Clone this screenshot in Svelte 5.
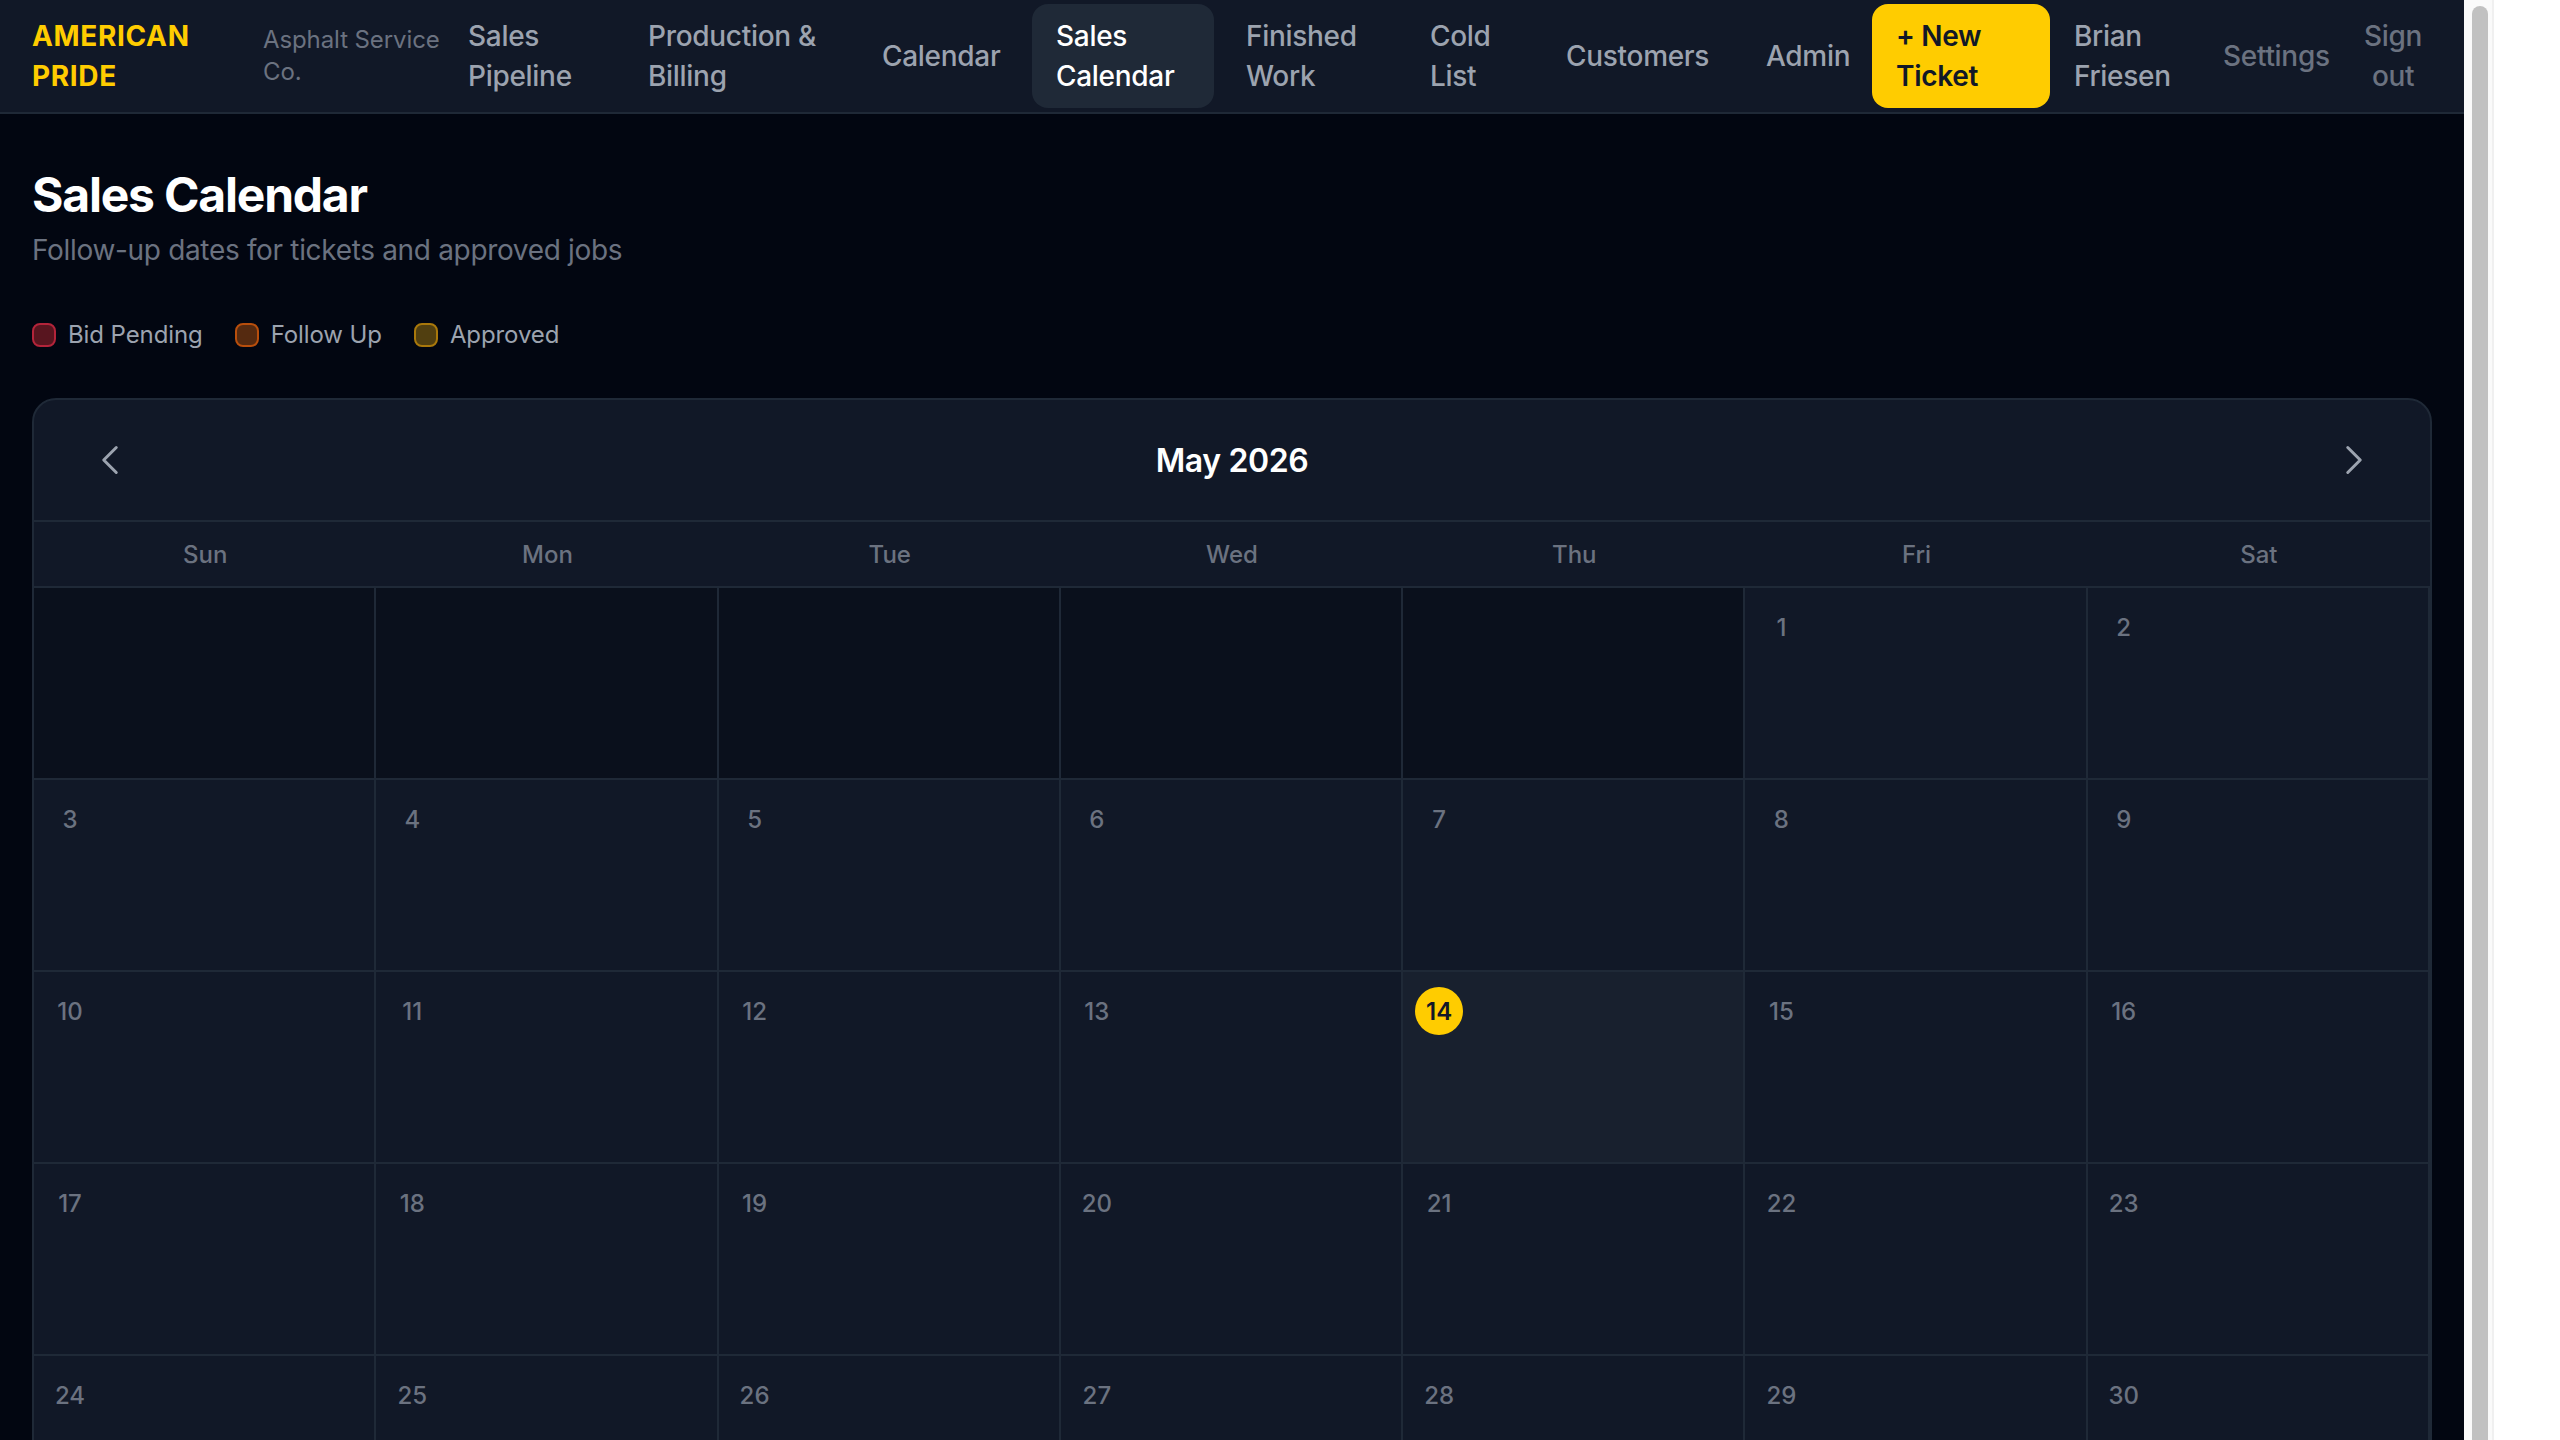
<script>
  const links = [
    { label: "Sales Pipeline", w: 172 },
    { label: "Production & Billing", w: 226 },
    { label: "Calendar", w: 166 },
    { label: "Sales Calendar", w: 182, active: true },
    { label: "Finished Work", w: 176 },
    { label: "Cold List", w: 128 },
    { label: "Customers", w: 192 },
    { label: "Admin", w: 122 },
    { label: "+ New Ticket", w: 178, cta: true },
    { label: "Brian Friesen", w: 145, user: true },
    { label: "Settings", w: 133, dim: true },
    { label: "Sign out", w: 80, dim: true, center: true },
  ];

  const legend = [
    { label: "Bid Pending", cls: "red" },
    { label: "Follow Up", cls: "orange" },
    { label: "Approved", cls: "amber" },
  ];

  const weekdays = ["Sun", "Mon", "Tue", "Wed", "Thu", "Fri", "Sat"];

  // May 2026 starts on a Friday
  const cells = [];
  for (let i = 0; i < 5; i++) cells.push(null);
  for (let d = 1; d <= 31; d++) cells.push(d);
  while (cells.length % 7) cells.push(null);
  const today = 14;
</script>

<div class="shell">
  <div class="page">
    <header class="topbar">
      <div class="brand">
        <div class="name">AMERICAN PRIDE</div>
        <div class="tag">Asphalt Service Co.</div>
      </div>
      {#each links as l}
        <a
          class="link"
          class:active={l.active}
          class:cta={l.cta}
          class:user={l.user}
          class:dim={l.dim}
          class:center={l.center}
          style="width: {l.w}px">{l.label}</a>
      {/each}
    </header>

    <main class="content">
      <h1>Sales Calendar</h1>
      <p class="sub">Follow-up dates for tickets and approved jobs</p>

      <div class="legend">
        {#each legend as item}
          <div class="legend-item">
            <span class="swatch {item.cls}"></span>
            <span>{item.label}</span>
          </div>
        {/each}
      </div>

      <section class="card">
        <div class="card-head">
          <button class="nav-btn" aria-label="Previous month">
            <svg viewBox="0 0 24 24" width="40" height="40" fill="none" stroke="currentColor" stroke-width="1.8">
              <path d="M15.75 19.5 8.25 12l7.5-7.5" stroke-linecap="round" stroke-linejoin="round" />
            </svg>
          </button>
          <h2>May 2026</h2>
          <button class="nav-btn" aria-label="Next month">
            <svg viewBox="0 0 24 24" width="40" height="40" fill="none" stroke="currentColor" stroke-width="1.8">
              <path d="m8.25 4.5 7.5 7.5-7.5 7.5" stroke-linecap="round" stroke-linejoin="round" />
            </svg>
          </button>
        </div>

        <div class="weekdays">
          {#each weekdays as w}
            <div class="weekday">{w}</div>
          {/each}
        </div>

        <div class="grid">
          {#each cells as d}
            <div class="cell" class:empty={d === null} class:today={d === today}>
              {#if d !== null}
                <span class="day">{d}</span>
              {/if}
            </div>
          {/each}
        </div>
      </section>
    </main>
  </div>

  <div class="scrollbar">
    <div class="thumb"></div>
  </div>
  <div class="blank"></div>
</div>

<style>
  :global(body) {
    margin: 0;
    background: #fff;
    overflow: hidden;
  }

  .shell {
    display: flex;
    height: 1440px;
    overflow: hidden;
    font-family: Inter, "Liberation Sans", sans-serif;
  }

  .page {
    width: 2464px;
    flex: none;
    background: #020611;
    overflow: hidden;
  }

  .scrollbar {
    width: 30px;
    flex: none;
    box-sizing: border-box;
    background: #fafafa;
    border-right: 2px solid #f0f0f0;
    padding: 6px 4px 0 8px;
  }

  .thumb {
    height: 1600px;
    background: #c1c1c1;
    border-radius: 8px;
  }

  .blank {
    flex: 1;
    background: #fff;
  }

  .topbar {
    display: flex;
    gap: 8px;
    box-sizing: border-box;
    height: 114px;
    padding: 4px 32px;
    background: #111827;
    border-bottom: 2px solid #1f2937;
  }

  .brand {
    display: flex;
    align-items: center;
    width: 404px;
    flex: none;
  }

  .name {
    width: 231px;
    flex: none;
    box-sizing: border-box;
    padding-right: 60px;
    color: #ffcc00;
    font-size: 28px;
    font-weight: 700;
    line-height: 40px;
    letter-spacing: 0.65px;
  }

  .tag {
    width: 180px;
    flex: none;
    color: #6b7280;
    font-size: 24px;
    line-height: 32px;
    letter-spacing: -0.1px;
  }

  .link {
    display: flex;
    align-items: center;
    flex: none;
    box-sizing: border-box;
    padding: 0 24px;
    border-radius: 16px;
    color: #9ca3af;
    font-size: 28px;
    font-weight: 500;
    line-height: 40px;
    letter-spacing: -0.3px;
  }

  .link.active {
    background: #1f2937;
    color: #fff;
  }

  .link.cta {
    background: #ffcc00;
    color: #111827;
    font-weight: 600;
  }

  .link.user {
    padding: 0 16px;
  }

  .link.dim {
    padding: 0 12px;
    color: #6b7280;
  }

  .link.center {
    text-align: center;
  }

  .content {
    padding: 49px 32px 48px;
  }

  h1 {
    margin: 0;
    color: #fff;
    font-size: 48px;
    font-weight: 700;
    line-height: 64px;
    letter-spacing: -1.2px;
  }

  .sub {
    margin: 3px 0 0;
    color: #6b7280;
    font-size: 28px;
    line-height: 40px;
    letter-spacing: -0.33px;
  }

  .legend {
    display: flex;
    gap: 32px;
    margin-top: 45px;
    margin-bottom: 43px;
    color: #9ca3af;
    font-size: 24px;
    line-height: 40px;
    letter-spacing: -0.1px;
  }

  .legend-item {
    display: flex;
    align-items: center;
    gap: 12px;
  }

  .swatch {
    width: 24px;
    height: 24px;
    box-sizing: border-box;
    border: 2px solid;
    border-radius: 8px;
  }

  .swatch.red {
    background: #58151f;
    border-color: #b3243a;
  }

  .swatch.orange {
    background: #552a10;
    border-color: #b84e0c;
  }

  .swatch.amber {
    background: #513f10;
    border-color: #a9780b;
  }

  .card {
    background: #111827;
    border: 2px solid #1f2937;
    border-radius: 24px;
    overflow: hidden;
  }

  .card-head {
    display: flex;
    align-items: center;
    justify-content: space-between;
    height: 120px;
    padding: 0 32px;
    border-bottom: 2px solid #1f2937;
  }

  h2 {
    margin: 0;
    color: #fff;
    font-size: 32px;
    font-weight: 600;
    letter-spacing: -0.4px;
  }

  .nav-btn {
    display: flex;
    padding: 16px 24px;
    border: 0;
    background: none;
    color: #9ca3af;
  }

  .weekdays {
    display: grid;
    grid-template-columns: repeat(7, 1fr);
    border-bottom: 2px solid #1f2937;
  }

  .weekday {
    height: 64px;
    color: #6b7280;
    font-size: 24px;
    font-weight: 500;
    line-height: 65px;
    text-align: center;
  }

  .grid {
    display: grid;
    grid-template-columns: repeat(7, 1fr);
  }

  .cell {
    box-sizing: border-box;
    height: 192px;
    padding: 15px 12px;
    border-right: 2px solid #1f2937;
    border-bottom: 2px solid #1f2937;
  }

  .cell.empty {
    background: #0a101c;
  }

  .cell.today {
    background: #18202e;
  }

  .day {
    display: flex;
    align-items: center;
    justify-content: center;
    width: 48px;
    height: 48px;
    border-radius: 50%;
    color: #6b7280;
    font-size: 24px;
    font-weight: 500;
  }

  .today .day {
    background: #ffcc00;
    color: #111827;
    font-weight: 600;
  }
</style>
